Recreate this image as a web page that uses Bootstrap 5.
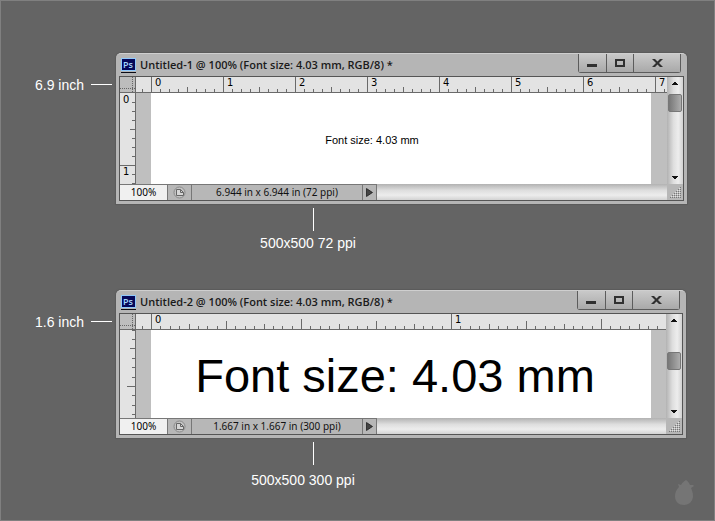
<!DOCTYPE html>
<html lang="en">
<head>
<meta charset="utf-8">
<meta name="viewport" content="width=device-width, initial-scale=1">
<title>Font size and resolution</title>
<link href="https://cdn.jsdelivr.net/npm/bootstrap@5.3.0/dist/css/bootstrap.min.css" rel="stylesheet">
<style>
  body { background: #646464; border: 1px solid #808080; color: #fff; font: 14px/16px "Liberation Sans", Arial, sans-serif; }
  .sheet { padding: 52px 0 0; }
  .side-note { flex: 0 0 115px; padding: 24px 4px 0 34px; gap: 7px; }
  .side-note i { height: 1px; background: #fff; margin-top: 7px; }
  .demo-first { padding-right: 27px; }
  .demo-second { padding-right: 28px; margin-top: 39px; }
  .below-note { width: 396px; margin: 4px 0 0 114px; }
  .below-note i { width: 1px; height: 23px; background: #fff; }
  .below-note p { margin: 4px 0 0; }
  .note-72 p { margin-right: 10px; }
  .note-300 p { margin: 7px 20px 0 0; }

  .win { flex: 1 1 0; min-width: 0; background: #b5b5b5; border-top: 1px solid #cfcfcf; border-radius: 5px 5px 0 0; padding: 0 3px 3px; color: #111; box-shadow: 0 0 1px 1px #5a5a5a; font-family: "DejaVu Sans Condensed", "Noto Sans", sans-serif; font-size: 11px; line-height: 14px; }
  .win-title { height: 22px; padding-left: 2px; gap: 4px; }
  .win-title h2 { margin: 0; font: 600 11px/22px "Open Sans", "Noto Sans", sans-serif; color: #1a1a1a; }
  .win-btns { height: 19px; margin-right: 3px; border: 1px solid #5c5c5c; border-top: 0; border-radius: 0 0 3px 3px; }
  .win-btns button { border: 0; padding: 0; height: 18px; line-height: 0; background: linear-gradient(#c9c9c9, #a9a9a9); }
  .win-btns button + button { border-left: 1px solid #5c5c5c; }
  .b-min { width: 27px; } .b-max { width: 27px; } .b-close { width: 47px; }
  .win-frame { border: 1px solid #555; }
  .view { flex: 1 1 0; min-width: 0; }
  .ruler-row { height: 16px; }
  .ruler-x, .ruler-y { background: #e3e3e3; overflow: hidden; }
  .corner { flex: 0 0 16px; background: #bdbdbd; }
  .ruler-x { flex: 1 1 0; min-width: 0; border-bottom: 1px solid #6a6a6a; }
  .ruler-y { flex: 0 0 16px; border-right: 1px solid #6a6a6a; }
  .ruler-x svg, .ruler-y svg, .corner svg { display: block; }
  .stage { flex: 1 1 0; background: #bfbfbf; padding-left: 15px; overflow: hidden; min-width: 0; }
  .paper { width: 500px; background: #fff; color: #000; font-family: "Liberation Sans", Arial, sans-serif; }
  .stage-72 { height: 91px; } .stage-300 { height: 88px; }
  .stage-72 .paper { font-size: 11px; line-height: 14px; padding: 2px 58px 0 0; }
  .stage-300 .paper { font-size: 47px; line-height: 56px; padding: 4px 12px 0 0; }
  .vbar { flex: 0 0 16px; background: linear-gradient(90deg, #b2b2b2, #dedede 40%, #ededed 70%, #d2d2d2); }
  .vbar button, .status button { border: 0; padding: 0; background: none; }
  .vbar button { height: 13px; line-height: 0; }
  .thumb { height: 18px; margin: 0 1px; border: 1px solid #777; border-radius: 2px; background: linear-gradient(90deg, #777, #adadad); }
  .thumb-top { margin-top: 4px; } .thumb-mid { margin-top: 25px; }
  .status { height: 16px; font-family: "Noto Sans", sans-serif; font-size: 10px; }
  .status > .cell { border-top: 1px solid #777; border-right: 1px solid #777; background: #b7b7b7; }
  .status input { width: 48px; border: 0; border-top: 1px solid #777; border-right: 1px solid #777; background: #f0f0f0; padding: 0 0 2px; text-align: center; color: #000; }
  .status .c-icon { width: 24px; } .status .c-info { width: 171px; } .status .c-more { width: 14px; border-top: 1px solid #777; border-right: 1px solid #777; background: #b7b7b7; line-height: 0; }
  .hbar { background: linear-gradient(#b2b2b2, #dedede 40%, #ededed 70%, #d2d2d2); }
  .grip { width: 16px; background: #b7b7b7; }
  .bird { position: fixed; right: 20px; bottom: 15px; }
</style>
<script src="https://cdn.jsdelivr.net/npm/bootstrap@5.3.0/dist/js/bootstrap.bundle.min.js"></script>
</head>
<body class="min-vh-100">
<svg class="d-none" aria-hidden="true">
  <symbol id="ps" viewBox="0 0 15 15"><path fill="#8fc8fb" d="M0 0h15v13H0z"/><path fill="#05085a" d="M1 1h13v11H1z"/><path fill="#0a0a14" d="M0 14h15v1H0z"/><text x="2" y="10" font-family="Open Sans, sans-serif" font-weight="600" font-size="9" fill="#a6d8ff">Ps</text></symbol>
  <symbol id="min" viewBox="0 0 11 9"><path fill="#303030" d="M0 5h10v3H0z"/></symbol>
  <symbol id="max" viewBox="0 0 11 9"><path fill="#303030" fill-rule="evenodd" d="M0 0h10v8H0zM2 2v4h6V2z"/></symbol>
  <symbol id="close" viewBox="0 0 11 9"><path fill="#303030" d="M0 0h3l2.500 2.500L8 0h3L7 4l4 4H8L5.500 5.500 3 8H0l4-4z"/></symbol>
  <symbol id="origin" viewBox="0 0 16 16"><path fill="none" stroke="#666" stroke-dasharray="1 1" d="M0 11.500h15M12.500 0v15"/><path fill="none" stroke="#6a6a6a" d="M15.500 0v16M0 15.500h16"/></symbol>
  <symbol id="up" viewBox="0 0 6 3"><path fill="#111" d="M2 0h2v1h1v1h1v1H0V2h1V1h1z"/></symbol>
  <symbol id="down" viewBox="0 0 6 3"><path fill="#111" d="M0 0h6v1H5v1H4v1H2V2H1V1H0z"/></symbol>
  <symbol id="doc" viewBox="0 0 13 13"><circle cx="6.500" cy="6.500" r="5.500" fill="#c2c2c2" stroke="#8a8a8a"/><path fill="#d6d6d6" stroke="#666" d="M3.500 9.500v-6h4l3 3v3z"/><path fill="none" stroke="#666" d="M7.500 3.500v3h3"/></symbol>
  <symbol id="play" viewBox="0 0 7 9"><path fill="#444" stroke="#111" stroke-width=".7" d="M.5.5v8l6-4z"/></symbol>
  <symbol id="grip" viewBox="0 0 11 11"><g stroke="#777" stroke-dasharray="1 1" fill="none"><path d="M0 10.500h11M2 8.500h9M4 6.500h7M6 4.500h5M8 2.500h3M10 .5h1"/></g><g stroke="#e2e2e2" stroke-dasharray="1 1" fill="none"><path d="M1 9.500h10M3 7.500h8M5 5.500h6M7 3.500h4M9 1.500h2"/></g></symbol>
</svg>

<main class="sheet">
  <section class="demo-first d-flex">
    <div class="side-note d-flex align-items-start"><span class="text-nowrap">6.9 inch</span><i class="flex-grow-1"></i></div>
    <div class="win">
      <header class="win-title d-flex">
        <svg class="mt-1" width="15" height="15"><use href="#ps"/></svg>
        <h2 class="flex-grow-1 text-nowrap">Untitled-1 @ 100% (Font size: 4.03 mm, RGB/8) *</h2>
        <div class="win-btns d-flex">
          <button class="b-min" type="button" aria-label="Minimize"><svg width="11" height="9"><use href="#min"/></svg></button>
          <button class="b-max" type="button" aria-label="Maximize"><svg width="11" height="9"><use href="#max"/></svg></button>
          <button class="b-close" type="button" aria-label="Close"><svg width="11" height="9"><use href="#close"/></svg></button>
        </div>
      </header>
      <div class="win-frame">
        <div class="d-flex">
          <div class="view">
            <div class="ruler-row d-flex">
              <div class="corner"><svg width="16" height="16"><use href="#origin"/></svg></div>
              <div class="ruler-x"><svg height="15" data-axis="x" data-ppi="72" data-div="8" data-zero="15"></svg></div>
            </div>
            <div class="d-flex stage-72">
              <div class="ruler-y"><svg width="15" height="91" data-axis="y" data-ppi="72" data-div="8" data-zero="0"></svg></div>
              <div class="stage d-flex"><div class="paper flex-shrink-0 d-flex align-items-center justify-content-center">Font size: 4.03 mm</div></div>
            </div>
          </div>
          <div class="vbar d-flex flex-column">
            <button type="button" aria-label="Scroll up"><svg width="6" height="3"><use href="#up"/></svg></button>
            <div class="thumb thumb-top"></div>
            <button class="mt-auto" type="button" aria-label="Scroll down"><svg width="6" height="3"><use href="#down"/></svg></button>
          </div>
        </div>
        <footer class="status d-flex">
          <input type="text" value="100%" aria-label="Zoom">
          <div class="cell c-icon d-flex align-items-center justify-content-center"><svg width="13" height="13"><use href="#doc"/></svg></div>
          <div class="cell c-info text-center text-nowrap">6.944 in x 6.944 in (72 ppi)</div>
          <button class="c-more" type="button" aria-label="Status options"><svg width="7" height="9"><use href="#play"/></svg></button>
          <div class="hbar flex-grow-1"></div>
          <div class="grip d-flex align-items-center justify-content-center"><svg width="11" height="11"><use href="#grip"/></svg></div>
        </footer>
      </div>
    </div>
  </section>
  <div class="below-note note-72 d-flex flex-column align-items-center"><i></i><p>500x500 72 ppi</p></div>

  <section class="demo-second d-flex">
    <div class="side-note d-flex align-items-start"><span class="text-nowrap">1.6 inch</span><i class="flex-grow-1"></i></div>
    <div class="win">
      <header class="win-title d-flex">
        <svg class="mt-1" width="15" height="15"><use href="#ps"/></svg>
        <h2 class="flex-grow-1 text-nowrap">Untitled-2 @ 100% (Font size: 4.03 mm, RGB/8) *</h2>
        <div class="win-btns d-flex">
          <button class="b-min" type="button" aria-label="Minimize"><svg width="11" height="9"><use href="#min"/></svg></button>
          <button class="b-max" type="button" aria-label="Maximize"><svg width="11" height="9"><use href="#max"/></svg></button>
          <button class="b-close" type="button" aria-label="Close"><svg width="11" height="9"><use href="#close"/></svg></button>
        </div>
      </header>
      <div class="win-frame">
        <div class="d-flex">
          <div class="view">
            <div class="ruler-row d-flex">
              <div class="corner"><svg width="16" height="16"><use href="#origin"/></svg></div>
              <div class="ruler-x"><svg height="15" data-axis="x" data-ppi="300" data-div="32" data-zero="15"></svg></div>
            </div>
            <div class="d-flex stage-300">
              <div class="ruler-y"><svg width="15" height="88" data-axis="y" data-ppi="300" data-div="32" data-zero="-19"></svg></div>
              <div class="stage d-flex"><div class="paper flex-shrink-0 d-flex align-items-center justify-content-center text-nowrap">Font size: 4.03 mm</div></div>
            </div>
          </div>
          <div class="vbar d-flex flex-column">
            <button type="button" aria-label="Scroll up"><svg width="6" height="3"><use href="#up"/></svg></button>
            <div class="thumb thumb-mid"></div>
            <button class="mt-auto" type="button" aria-label="Scroll down"><svg width="6" height="3"><use href="#down"/></svg></button>
          </div>
        </div>
        <footer class="status d-flex">
          <input type="text" value="100%" aria-label="Zoom">
          <div class="cell c-icon d-flex align-items-center justify-content-center"><svg width="13" height="13"><use href="#doc"/></svg></div>
          <div class="cell c-info text-center text-nowrap">1.667 in x 1.667 in (300 ppi)</div>
          <button class="c-more" type="button" aria-label="Status options"><svg width="7" height="9"><use href="#play"/></svg></button>
          <div class="hbar flex-grow-1"></div>
          <div class="grip d-flex align-items-center justify-content-center"><svg width="11" height="11"><use href="#grip"/></svg></div>
        </footer>
      </div>
    </div>
  </section>
  <div class="below-note note-300 d-flex flex-column align-items-center"><i></i><p>500x500 300 ppi</p></div>
</main>
<svg class="bird" width="21" height="27" viewBox="0 0 21 27" aria-hidden="true"><path fill="#757575" d="M12 1C10 2 8 4 7 6L4 5l1 3C2 11 1 14 1 17c0 6 4 9 9 9s9-4 9-9c0-3-1-6-2-8l3-2-1-1-3 0c-1-2-2-4-4-5z"/></svg>

<script>
  // Draws the tick marks and inch labels of each ruler, as far as the ruler reaches.
  function drawRuler(svg) {
    var d = svg.dataset, ppi = +d.ppi, div = +d.div, zero = +d.zero, across = d.axis === 'x';
    svg.textContent = '';
    if (across) svg.setAttribute('width', svg.parentNode.clientWidth);
    var length = +svg.getAttribute(across ? 'width' : 'height'), path = '';
    for (var i = -4; zero + i * ppi / div < length; i++) {
      var at = Math.round(zero + i * ppi / div - (across ? 0 : 0.1));
      if (at < 0) continue;
      var part = Math.abs(i) % div, size = 3;
      if (part === 0) size = 15;
      else if (div === 8) size = part === 4 ? 5 : 3;
      else if (part === 16) size = 10;
      else if (part % 8 === 0) size = 8;
      else if (part % 4 === 0) size = 5;
      if (!(part === 0 && at === 0)) path += across ? 'M' + at + ' ' + (15 - size) + 'h1v' + size + 'h-1z' : 'M' + (15 - size) + ' ' + at + 'h' + size + 'v1h-' + size + 'z';
      if (part === 0 && i >= 0) {
        var t = document.createElementNS('http://www.w3.org/2000/svg', 'text');
        t.setAttribute('x', across ? at + 4 : 3);
        t.setAttribute('y', across ? 9 : at + 10);
        t.textContent = i / div;
        svg.appendChild(t);
      }
    }
    var p = document.createElementNS('http://www.w3.org/2000/svg', 'path');
    p.setAttribute('d', path);
    p.setAttribute('fill', '#6a6a6a');
    svg.appendChild(p);
  }
  function drawAll() { document.querySelectorAll('svg[data-axis]').forEach(drawRuler); }
  drawAll();
  window.addEventListener('resize', drawAll);
</script>
</body>
</html>
